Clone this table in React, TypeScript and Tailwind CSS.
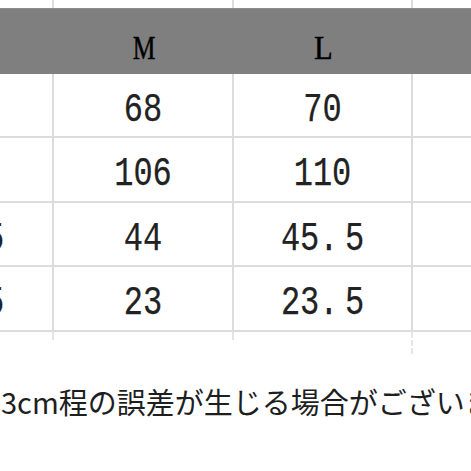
import React from "react";

const rows: { left: string; m: string; l: string; h: string }[] = [
  { left: "", m: "68", l: "70", h: "h-[64px]" },
  { left: "", m: "106", l: "110", h: "h-[65px]" },
  { left: "5", m: "44", l: "45.\u20095", h: "h-[64px]" },
  { left: "5", m: "23", l: "23.\u20095", h: "h-[65px]" },
];

function Num({ children }: { children: React.ReactNode }) {
  return (
    <span
      className="inline-block text-[32px] leading-none text-[#222222] scale-y-125 pt-[9px]"
      style={{ fontFamily: '"Liberation Mono", monospace', WebkitTextStroke: "0.2px #222222" }}
    >
      {children}
    </span>
  );
}

function Head({ children, narrow }: { children: React.ReactNode; narrow?: boolean }) {
  return (
    <span
      className={
        narrow
          ? "text-[34px] leading-none text-black scale-x-75 inline-block"
          : "text-[34px] leading-none text-black scale-x-90 inline-block"
      }
      style={{ fontFamily: '"Liberation Serif", serif', WebkitTextStroke: "0.5px #000" }}
    >
      {children}
    </span>
  );
}

export default function App() {
  return (
    <div className="w-[471px] h-[471px] bg-white overflow-hidden relative">
      {/* top partial row */}
      <div className="flex h-[8px]">
        <div className="w-[54px] border-r-2 border-[#dcdcdc]" />
        <div className="w-[180px] border-r-2 border-[#dcdcdc]" />
        <div className="w-[179px] border-r-2 border-[#dcdcdc]" />
        <div className="flex-1" />
      </div>
      {/* header */}
      <div className="flex h-[66px] bg-[#7f7f7f] border-t border-[#8c8c8c]">
        <div className="w-[54px]" />
        <div className="w-[180px] flex items-center justify-center pt-[12px]">
          <Head narrow>M</Head>
        </div>
        <div className="w-[179px] flex items-center justify-center pt-[12px]">
          <Head>L</Head>
        </div>
        <div className="flex-1" />
      </div>
      {/* body */}
      {rows.map((r, i) => (
        <div key={i} className={`flex ${r.h} border-b-2 border-[#dcdcdc]`}>
          <div className="w-[54px] border-r-2 border-[#dcdcdc] flex items-center overflow-hidden">
            {r.left && (
              <div className="-ml-[15px]">
                <Num>{r.left}</Num>
              </div>
            )}
          </div>
          <div className="w-[180px] border-r-2 border-[#dcdcdc] flex items-center justify-center">
            <Num>{r.m}</Num>
          </div>
          <div className="w-[179px] border-r-2 border-[#dcdcdc] flex items-center justify-center">
            <Num>{r.l}</Num>
          </div>
          <div className="flex-1" />
        </div>
      ))}
      {/* stubs below table */}
      <div className="flex h-[24px]">
        <div className="w-[54px] h-[8px] border-r-2 border-[#e4e4e4]" />
        <div className="w-[180px] h-[8px] border-r-2 border-[#e4e4e4]" />
        <div className="w-[179px] h-[22px] border-r-2 border-dashed border-[#e6e6e6]" />
        <div className="flex-1" />
      </div>
      {/* note */}
      <div
        className="mt-[31px] pl-[1px] whitespace-nowrap text-[29px] leading-none text-[#1e1e1e]"
        style={{ fontFamily: '"Noto Sans CJK JP", "Noto Sans", sans-serif' }}
      >
        3cm程の誤差が生じる場合がございます。
      </div>
    </div>
  );
}
